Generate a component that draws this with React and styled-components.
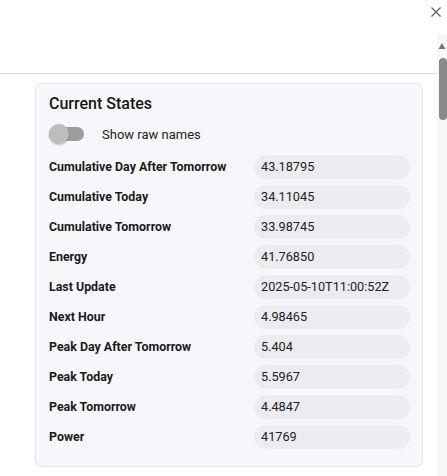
import React, { useState } from "react";
import styled, { createGlobalStyle } from "styled-components";

const GlobalStyle = createGlobalStyle`
  html, body {
    margin: 0;
    padding: 0;
    background: #ffffff;
    overflow: hidden;
  }
  body {
    font-family: Roboto, "Liberation Sans", Arial, sans-serif;
    color: #1c1c1e;
  }
  * {
    box-sizing: border-box;
  }
`;

export const Dialog = styled.div`
  width: 447px;
  height: 476px;
  display: flex;
  flex-direction: column;
`;

export const TopBar = styled.div`
  height: 35px;
  display: flex;
  justify-content: flex-end;
  align-items: flex-start;
  padding: 6px 5px 0 0;
`;

export const CloseButton = styled.button`
  width: 12px;
  height: 12px;
  padding: 0;
  border: none;
  background: none;
  cursor: pointer;
  color: #5f5f5f;
  display: flex;
`;

export const Body = styled.div`
  flex: 1;
  display: flex;
  flex-direction: row;
  min-height: 0;
`;

export const Content = styled.div`
  flex: 1;
  min-width: 0;
  overflow: hidden;
`;

export const TabsArea = styled.div`
  height: 39px;
  border-bottom: 1px solid #dedede;
`;

export const Card = styled.section`
  margin: 9px 14px 0 35px;
  background: #f7f7fb;
  border: 1px solid #e6e6ea;
  border-radius: 6px;
  padding: 10px 12px 17px 13px;
`;

export const Title = styled.h2`
  margin: 0;
  font-size: 16px;
  font-weight: 500;
  line-height: 20px;
  color: #161618;
`;

export const ToggleRow = styled.label`
  margin-top: 8px;
  height: 24px;
  display: flex;
  align-items: center;
  gap: 18px;
  font-size: 13px;
  color: #222;
  cursor: pointer;
`;

export const Track = styled.span`
  position: relative;
  width: 35px;
  height: 14px;
  border-radius: 7px;
  background: ${(p) => (p.$on ? "#8fb6e6" : "#9c9c9c")};
  display: inline-block;
  flex-shrink: 0;
`;

export const Knob = styled.span`
  position: absolute;
  top: -3px;
  left: ${(p) => (p.$on ? "15px" : "0")};
  width: 20px;
  height: 20px;
  border-radius: 50%;
  background: ${(p) => (p.$on ? "#3d7fd1" : "#bdbdbd")};
  box-shadow: 0 1px 2px rgba(0, 0, 0, 0.25);
`;

export const StateGrid = styled.div`
  margin-top: 9px;
  display: grid;
  grid-template-columns: 205px 1fr;
  row-gap: 6px;
  align-items: center;
`;

export const Label = styled.div`
  font-size: 12.4px;
  font-weight: 700;
  line-height: 24px;
  color: #1a1a1c;
  white-space: nowrap;
`;

export const Value = styled.div`
  height: 24px;
  border-radius: 12px;
  background: #ebebf0;
  padding: 0 7px;
  font-size: 12.7px;
  line-height: 24px;
  color: #222;
  white-space: nowrap;
  overflow: hidden;
`;

export const ScrollTrack = styled.div`
  width: 10px;
  background: #f7f7f7;
  display: flex;
  flex-direction: column;
  align-items: center;
`;

export const ScrollArrow = styled.svg`
  width: 10px;
  height: 23px;
  display: block;
  flex-shrink: 0;
`;

export const ScrollThumb = styled.div`
  width: 8px;
  height: 62px;
  border-radius: 4px;
  background: #8a8a8a;
  margin-left: 1px;
`;

const states = [
  { raw: "cumulative_day_after_tomorrow", name: "Cumulative Day After Tomorrow", value: "43.18795" },
  { raw: "cumulative_today", name: "Cumulative Today", value: "34.11045" },
  { raw: "cumulative_tomorrow", name: "Cumulative Tomorrow", value: "33.98745" },
  { raw: "energy", name: "Energy", value: "41.76850" },
  { raw: "last_update", name: "Last Update", value: "2025-05-10T11:00:52Z" },
  { raw: "next_hour", name: "Next Hour", value: "4.98465" },
  { raw: "peak_day_after_tomorrow", name: "Peak Day After Tomorrow", value: "5.404" },
  { raw: "peak_today", name: "Peak Today", value: "5.5967" },
  { raw: "peak_tomorrow", name: "Peak Tomorrow", value: "4.4847" },
  { raw: "power", name: "Power", value: "41769" },
];

const App = () => {
  const [rawNames, setRawNames] = useState(false);

  return (
    <Dialog>
      <GlobalStyle />
      <TopBar>
        <CloseButton aria-label="Close">
          <svg width="12" height="12" viewBox="0 0 12 12">
            <path
              d="M1.5 1.5 L10.5 10.5 M10.5 1.5 L1.5 10.5"
              stroke="currentColor"
              strokeWidth="1.2"
              fill="none"
            />
          </svg>
        </CloseButton>
      </TopBar>
      <Body>
        <Content>
          <TabsArea />
          <Card>
            <Title>Current States</Title>
            <ToggleRow onClick={() => setRawNames(!rawNames)}>
              <Track $on={rawNames}>
                <Knob $on={rawNames} />
              </Track>
              Show raw names
            </ToggleRow>
            <StateGrid>
              {states.map((s) => (
                <React.Fragment key={s.raw}>
                  <Label>{rawNames ? s.raw : s.name}</Label>
                  <Value>{s.value}</Value>
                </React.Fragment>
              ))}
            </StateGrid>
          </Card>
        </Content>
        <ScrollTrack>
          <ScrollArrow viewBox="0 0 10 23">
            <path d="M1.5 14 L5 8 L8.5 14 Z" fill="#777" />
          </ScrollArrow>
          <ScrollThumb />
        </ScrollTrack>
      </Body>
    </Dialog>
  );
};

export default App;
